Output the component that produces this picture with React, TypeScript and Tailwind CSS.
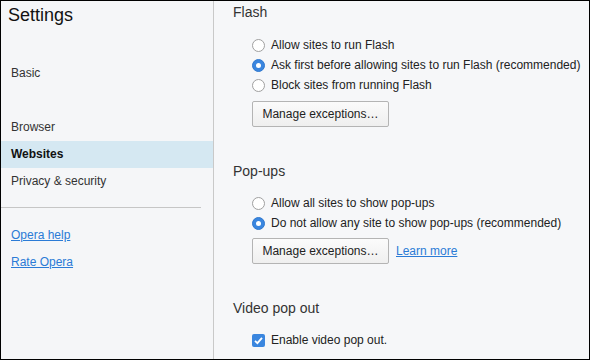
const font = { fontFamily: '"Liberation Sans", Arial, sans-serif' };

function Radio({ checked, label }: { checked?: boolean; label: string }) {
  return (
    <div className="flex items-center h-[20px] text-[12px] leading-[20px] text-[#222]">
      {checked ? (
        <span className="w-[13px] h-[13px] rounded-full bg-[#3a86df] border border-[#2f78cf] flex items-center justify-center">
          <span className="w-[5px] h-[5px] rounded-full bg-white" />
        </span>
      ) : (
        <span className="w-[13px] h-[13px] rounded-full bg-white border border-[#a0a0a0]" />
      )}
      <span className="ml-[6px]">{label}</span>
    </div>
  );
}

function ManageButton() {
  return (
    <button className="w-[137px] h-[26px] rounded-[2px] border border-[#b4b4b4] bg-gradient-to-b from-[#fbfbfb] to-[#efefef] text-[12px] text-[#222] flex items-center justify-center">
      Manage exceptions…
    </button>
  );
}

function Heading({ children, mt }: { children: string; mt: string }) {
  return <div className={`${mt} h-[20px] text-[14px] leading-[20px] text-[#333] pl-[19px]`}>{children}</div>;
}

function NavItem({ label, active }: { label: string; active?: boolean }) {
  return (
    <div
      className={
        active
          ? 'h-[27px] leading-[27px] pl-[10px] text-[12px] font-bold text-[#111] bg-[#d5e8f2]'
          : 'h-[27px] leading-[27px] pl-[10px] text-[12px] text-[#333]'
      }
    >
      {label}
    </div>
  );
}

export default function App() {
  return (
    <div style={font} className="w-[590px] h-[360px] border border-black flex bg-[#f5f6f8] overflow-hidden">
      {/* Barra lateral */}
      <div className="w-[213px] shrink-0 border-r border-[#c9c9c9] bg-[#f5f6f8] flex flex-col">
        <div className="h-[59px] pt-[2px] pl-[7px] text-[18px] leading-[24px] text-[#111]">Settings</div>
        <NavItem label="Basic" />
        <div className="h-[27px]" />
        <NavItem label="Browser" />
        <NavItem label="Websites" active />
        <NavItem label="Privacy & security" />
        <div className="mt-[12px] mr-[12px] h-px bg-[#c6c6c6]" />
        <div className="mt-[14px] h-[27px] leading-[27px] pl-[10px] text-[12px]">
          <a className="text-[#2b7bd6] underline">Opera help</a>
        </div>
        <div className="h-[27px] leading-[27px] pl-[10px] text-[12px]">
          <a className="text-[#2b7bd6] underline">Rate Opera</a>
        </div>
      </div>

      {/* Contenido */}
      <div className="flex-1 bg-[#f6f7f9] flex flex-col">
        <Heading mt="mt-[1px]">Flash</Heading>
        <div className="pl-[38px] mt-[13px]">
          <Radio label="Allow sites to run Flash" />
          <Radio checked label="Ask first before allowing sites to run Flash (recommended)" />
          <Radio label="Block sites from running Flash" />
          <div className="mt-[6px]">
            <ManageButton />
          </div>
        </div>

        <Heading mt="mt-[34px]">Pop-ups</Heading>
        <div className="pl-[38px] mt-[12px]">
          <Radio label="Allow all sites to show pop-ups" />
          <Radio checked label="Do not allow any site to show pop-ups (recommended)" />
          <div className="mt-[5px] flex items-center">
            <ManageButton />
            <a className="ml-[7px] text-[12px] text-[#2b7bd6] underline">Learn more</a>
          </div>
        </div>

        <Heading mt="mt-[34px]">Video pop out</Heading>
        <div className="pl-[38px] mt-[12px]">
          <div className="flex items-center h-[20px] text-[12px] leading-[20px] text-[#222]">
            <span className="w-[13px] h-[13px] rounded-[2px] bg-[#3a86df] flex items-center justify-center">
              <svg width="11" height="11" viewBox="0 0 11 11">
                <path d="M2 5.8 L4.4 8.2 L9 2.8" fill="none" stroke="white" strokeWidth="1.8" />
              </svg>
            </span>
            <span className="ml-[6px]">Enable video pop out.</span>
          </div>
        </div>
      </div>
    </div>
  );
}
